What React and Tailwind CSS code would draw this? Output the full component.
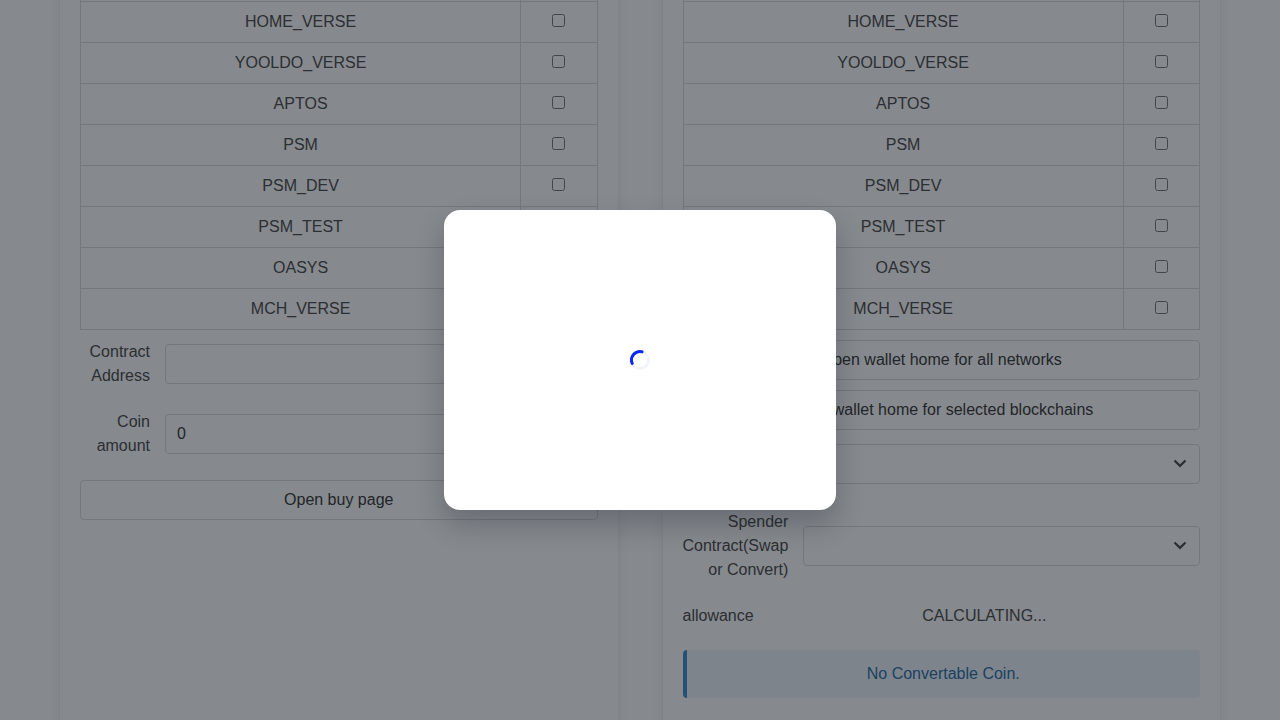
const NETWORKS = ['', 'HOME_VERSE', 'YOOLDO_VERSE', 'APTOS', 'PSM', 'PSM_DEV', 'PSM_TEST', 'OASYS', 'MCH_VERSE'];

function NetworkTable() {
  return (
    <table className="w-full table-fixed border-collapse text-center">
      <tbody>
        {NETWORKS.map((name) => (
          <tr key={name} className="h-[41px]">
            <td className="w-[440px] border border-[#dbdbdb] py-2 pl-[12.2px] pr-3 align-top">{name}</td>
            <td className="border border-[#dbdbdb] px-3 py-2 align-top">
              <input type="checkbox" className="align-baseline" />
            </td>
          </tr>
        ))}
      </tbody>
    </table>
  );
}

function Card({ children }) {
  return (
    <section className="-mt-[60px] h-[840px] min-w-0 flex-1 rounded-md bg-white p-5 shadow-[0_8px_16px_-2px_rgba(10,10,10,0.1),0_0_0_1px_rgba(10,10,10,0.02)]">
      {children}
    </section>
  );
}

function Button({ children }) {
  return (
    <button className="h-10 w-full rounded border border-[#dbdbdb] bg-white text-center text-[#363636]">
      {children}
    </button>
  );
}

function Select() {
  return (
    <div className="flex h-10 flex-1 items-center justify-end rounded border border-[#dbdbdb] bg-white pr-3">
      <svg width="14" height="14" viewBox="0 0 14 14" fill="none" stroke="#4a4a4a" strokeWidth="2.2" className="mb-0.5">
        <path d="M1.5 4.5 L7 9.9 L12.5 4.5" />
      </svg>
    </div>
  );
}

function Field({ label, labelClass, children }) {
  return (
    <div className="flex items-center gap-[15px]">
      <span className={labelClass}>{label}</span>
      {children}
    </div>
  );
}

const INPUT = 'h-10 min-w-0 flex-1 rounded border border-[#dbdbdb] bg-white px-[11px] text-[#363636]';

export default function App() {
  return (
    <div className="relative h-[720px] w-full overflow-hidden bg-white font-['Liberation_Sans',Arial,sans-serif] text-base leading-6 text-[#4a4a4a]">
      <main className="flex gap-[45px] px-[60px]">
        <Card>
          <NetworkTable />
          <div className="mt-2.5 flex flex-col gap-[22px]">
            <Field label="Contract Address" labelClass="w-[70px] text-right">
              <input className={INPUT} />
            </Field>
            <Field label="Coin amount" labelClass="w-[70px] text-right">
              <input className={INPUT} defaultValue="0" />
            </Field>
            <Button>Open buy page</Button>
          </div>
        </Card>
        <Card>
          <NetworkTable />
          <div className="mt-2.5 flex flex-col gap-2.5">
            <Button>Open wallet home for all networks</Button>
            <Button>Open wallet home for selected blockchains</Button>
          </div>
          <div className="mt-2.5 flex flex-col gap-[22px]">
            <Field label="" labelClass="h-12 w-[105.8px]">
              <Select />
            </Field>
            <Field label="Spender Contract(Swap or Convert)" labelClass="w-[105.8px] text-right">
              <Select />
            </Field>
            <Field label="allowance">
              <span className="flex-1 text-center">CALCULATING...</span>
            </Field>
            <div className="rounded border-l-4 border-[#3e8ed0] bg-[#eff5fb] py-3 text-center text-[#296fa8]">
              No Convertable Coin.
            </div>
          </div>
        </Card>
      </main>
      <div className="absolute inset-0 flex items-center justify-center bg-[rgba(14,20,28,0.5)]">
        <div className="flex h-[300px] w-[392px] items-center justify-center rounded-[16px] bg-white shadow-[0_14px_28px_rgba(14,20,36,0.24)]">
          <svg width="20" height="20" viewBox="0 0 20 20" fill="none" strokeWidth="3">
            <circle cx="10" cy="10" r="8.5" stroke="#f1f4fb" />
            <path d="M12 1.8 A8.5 8.5 0 0 0 2.2 13.4" stroke="#0a29f5" strokeLinecap="round" />
          </svg>
        </div>
      </div>
    </div>
  );
}
